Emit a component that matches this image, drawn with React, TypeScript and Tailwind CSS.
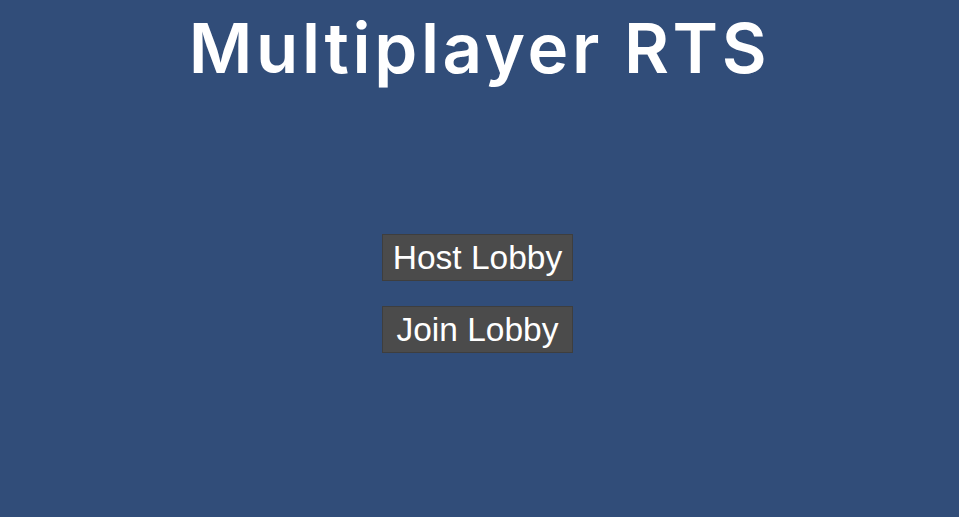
export default function App() {
  const buttons = ["Host Lobby", "Join Lobby"];
  return (
    <div className="w-[959px] h-[517px] bg-[#314d79] flex flex-col items-center overflow-hidden">
      <h1 className="mt-[6px] text-white font-semibold text-[69px] leading-[84px] tracking-[3.6px] font-['Inter',sans-serif]">
        Multiplayer RTS
      </h1>
      <div className="mt-[144px] flex flex-col items-center gap-[25px] ml-[-4px]">
        {buttons.map((label) => (
          <button
            key={label}
            className="w-[191px] h-[47px] bg-[#4b4b4b] border border-[#3e3e3e] text-white text-[33.5px] leading-none font-['Liberation_Sans',Arial,sans-serif] flex items-center justify-center"
          >
            {label}
          </button>
        ))}
      </div>
    </div>
  );
}
